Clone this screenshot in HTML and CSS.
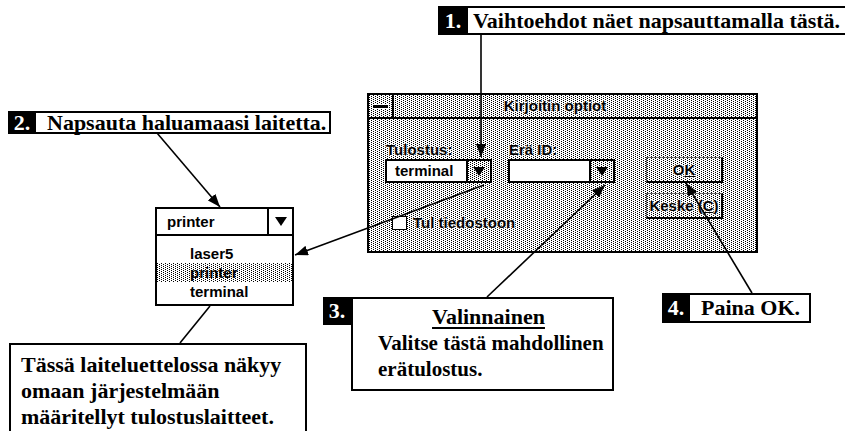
FILE: index.html
```html
<!DOCTYPE html>
<html lang="fi">
<head>
  <meta charset="UTF-8">
  <title>Kirjoitin optiot</title>
  <link rel="stylesheet" href="styles.css">
</head>
<body>
  <div class="stage">

    <div class="callout c1">
      <span class="tag">1.</span>
      <span class="txt">Vaihtoehdot näet napsauttamalla tästä.</span>
    </div>

    <div class="callout c2">
      <span class="tag">2.</span>
      <span class="txt">Napsauta haluamaasi laitetta.</span>
    </div>

    <div class="dialog dither">
      <div class="titlebar">
        <div class="closebox"><span class="bar"></span></div>
        <div class="title">Kirjoitin optiot</div>
      </div>
      <div class="dlg-body">
        <div class="fields">
          <div class="row">
            <div class="field">
              <label>Tulostus:</label>
              <div class="combo">
                <span class="value">terminal</span>
                <span class="drop dither"><i class="tri"></i></span>
              </div>
            </div>
            <div class="field">
              <label>Erä ID:</label>
              <div class="combo">
                <span class="value"></span>
                <span class="drop dither"><i class="tri"></i></span>
              </div>
            </div>
          </div>
          <div class="check">
            <span class="box"></span>
            <span>Tul tiedostoon</span>
          </div>
        </div>
        <div class="buttons">
          <button class="btn dither">O<u>K</u></button>
          <button class="btn dither">Keske (<u>C</u>)</button>
        </div>
      </div>
    </div>

    <div class="listbox">
      <div class="lb-head">
        <span class="value">printer</span>
        <span class="drop"><i class="tri"></i></span>
      </div>
      <ul class="lb-items">
        <li>laser5</li>
        <li class="sel dither">printer</li>
        <li>terminal</li>
      </ul>
    </div>

    <div class="callout c3">
      <span class="tag">3.</span>
      <div class="txt">
        <div class="head">Valinnainen</div>
        <div class="body">Valitse tästä mahdollinen<br>erätulostus.</div>
      </div>
    </div>

    <div class="callout c4">
      <span class="tag">4.</span>
      <span class="txt">Paina OK.</span>
    </div>

    <div class="note">
      Tässä laiteluettelossa näkyy<br>
      omaan järjestelmään<br>
      määritellyt tulostuslaitteet.
    </div>

    <svg class="arrows" width="845" height="431" viewBox="0 0 845 431">
      <defs>
        <marker id="ah" viewBox="0 0 13 10" refX="13" refY="5" markerWidth="13" markerHeight="10" markerUnits="userSpaceOnUse" orient="auto">
          <path d="M0,0 L13,5 L0,10 z" fill="#000"/>
        </marker>
      </defs>
      <g stroke="#000" stroke-width="1.6" fill="none">
        <line x1="481" y1="35" x2="481" y2="157" marker-end="url(#ah)"/>
        <line x1="157" y1="133" x2="220" y2="207" marker-end="url(#ah)"/>
        <line x1="484" y1="185" x2="295" y2="255" marker-end="url(#ah)"/>
        <line x1="487" y1="297" x2="605" y2="185" marker-end="url(#ah)"/>
        <line x1="752" y1="293" x2="686" y2="183" marker-end="url(#ah)"/>
        <line x1="210" y1="306" x2="180" y2="343"/>
      </g>
    </svg>

  </div>
</body>
</html>
```

FILE: styles.css
```css
html, body {
  margin: 0;
  padding: 0;
  background: #fff;
  color: #000;
}

.stage {
  position: relative;
  width: 845px;
  height: 431px;
  overflow: hidden;
}

/* 25% dot pattern like the old screen dither */
.dither {
  background-color: #fff;
  background-image:
    conic-gradient(from 270deg at 1px 1px, #000 25%, transparent 0),
    conic-gradient(from 270deg at 1px 1px, #000 25%, transparent 0);
  background-size: 4px 2px;
  background-position: 0 0, 2px 1px;
}

/* callouts */
.callout {
  position: absolute;
  display: flex;
  align-items: stretch;
  font-family: "Liberation Serif", "Times New Roman", serif;
  font-weight: bold;
  font-size: 22px;
  box-sizing: border-box;
}

.callout .tag {
  background: #000;
  color: #fff;
  width: 28px;
  display: flex;
  align-items: center;
  justify-content: center;
  flex: none;
}

.callout .txt {
  flex: 1;
  border: 2px solid #000;
  border-left: none;
  background: #fff;
  display: flex;
  align-items: center;
  padding-left: 8px;
}

.c1 { left: 438px; top: 6px; width: 409px; height: 29px; }
.c1 .tag { width: 30px; }
.c1 .txt { padding-left: 5px; }
.c2 { left: 8px; top: 111px; width: 323px; height: 23px; }
.c2 .txt { padding-left: 11px; }
.c4 { left: 662px; top: 293px; width: 149px; height: 30px; }
.c4 .txt { padding-left: 11px; }

.c3 {
  left: 323px;
  top: 297px;
  width: 291px;
  height: 94px;
  align-items: flex-start;
}
.c3 .tag { height: 28px; }
.c3 .txt {
  height: 100%;
  box-sizing: border-box;
  border-left: 2px solid #000;
  flex-direction: column;
  align-items: flex-start;
  padding: 5px 0 0 25px;
  line-height: 26px;
}
.c3 .head {
  align-self: center;
  margin-left: -13px;
  text-decoration: underline;
  text-decoration-thickness: 2px;
  text-underline-offset: 3px;
}
.c3 .body { font-size: 21px; }

.note {
  position: absolute;
  left: 9px;
  top: 343px;
  width: 298px;
  height: 100px;
  box-sizing: border-box;
  border: 2px solid #000;
  padding: 7px 0 0 10px;
  font-family: "Liberation Serif", "Times New Roman", serif;
  font-weight: bold;
  font-size: 22px;
  line-height: 26px;
  background: #fff;
}

/* dialog */
.dialog {
  position: absolute;
  left: 367px;
  top: 93px;
  width: 391px;
  height: 160px;
  box-sizing: border-box;
  border: 2px solid #000;
  font-family: "Liberation Sans", Arial, sans-serif;
  font-weight: bold;
  font-size: 15px;
}

.dialog label,
.dialog .title,
.check span:last-child {
  text-shadow: 0 0 2px #fff, 0 0 2px #fff;
}

.titlebar {
  display: flex;
  height: 22px;
  border-bottom: 2px solid #000;
}

.closebox {
  width: 23px;
  border-right: 2px solid #000;
  display: flex;
  align-items: center;
  justify-content: center;
}

.closebox .bar {
  width: 15px;
  height: 3px;
  background: #000;
  border: 1px solid #fff;
}

.title {
  flex: 1;
  text-align: center;
  line-height: 22px;
  padding-right: 40px;
}

.dlg-body {
  display: flex;
  padding: 22px 0 0 16px;
}

.fields {
  display: flex;
  flex-direction: column;
}

.row {
  display: flex;
  gap: 16px;
}

.field {
  display: flex;
  flex-direction: column;
}

.field label {
  line-height: 18px;
  margin-left: 1px;
}

.combo {
  display: flex;
  width: 107px;
  height: 24px;
  box-sizing: border-box;
  border: 2px solid #000;
}

.combo .value {
  flex: 1;
  background: #fff;
  padding-left: 8px;
  line-height: 20px;
}

.drop {
  width: 22px;
  border-left: 2px solid #000;
  display: flex;
  align-items: center;
  justify-content: center;
}

.tri {
  width: 0;
  height: 0;
  border-left: 6px solid transparent;
  border-right: 6px solid transparent;
  border-top: 9px solid #000;
}

.check {
  display: flex;
  align-items: center;
  gap: 6px;
  margin: 31px 0 0 7px;
}

.check .box {
  width: 13px;
  height: 12px;
  border: 1.5px solid #000;
  background: #fff;
}

.buttons {
  display: flex;
  flex-direction: column;
  gap: 10px;
  margin: 16px 0 0 31px;
}

.btn {
  width: 77px;
  height: 26px;
  border: 1px solid #666;
  border-right: 2px solid #000;
  border-bottom: 2px solid #000;
  font: inherit;
  color: #000;
  padding: 0;
  text-shadow: 0 0 2px #fff, 0 0 2px #fff;
}

/* device list */
.listbox {
  position: absolute;
  left: 155px;
  top: 207px;
  width: 139px;
  height: 99px;
  box-sizing: border-box;
  border: 2px solid #000;
  background: #fff;
  font-family: "Liberation Sans", Arial, sans-serif;
  font-weight: bold;
  font-size: 15px;
}

.lb-head {
  display: flex;
  height: 25px;
  border-bottom: 2px solid #000;
}

.lb-head .value {
  flex: 1;
  padding-left: 10px;
  line-height: 25px;
}

.lb-head .drop {
  width: 23px;
}

.lb-items {
  list-style: none;
  margin: 0;
  padding: 8px 0 0;
}

.lb-items li {
  padding-left: 33px;
  line-height: 19px;
}

.arrows {
  position: absolute;
  left: 0;
  top: 0;
  pointer-events: none;
}
```
